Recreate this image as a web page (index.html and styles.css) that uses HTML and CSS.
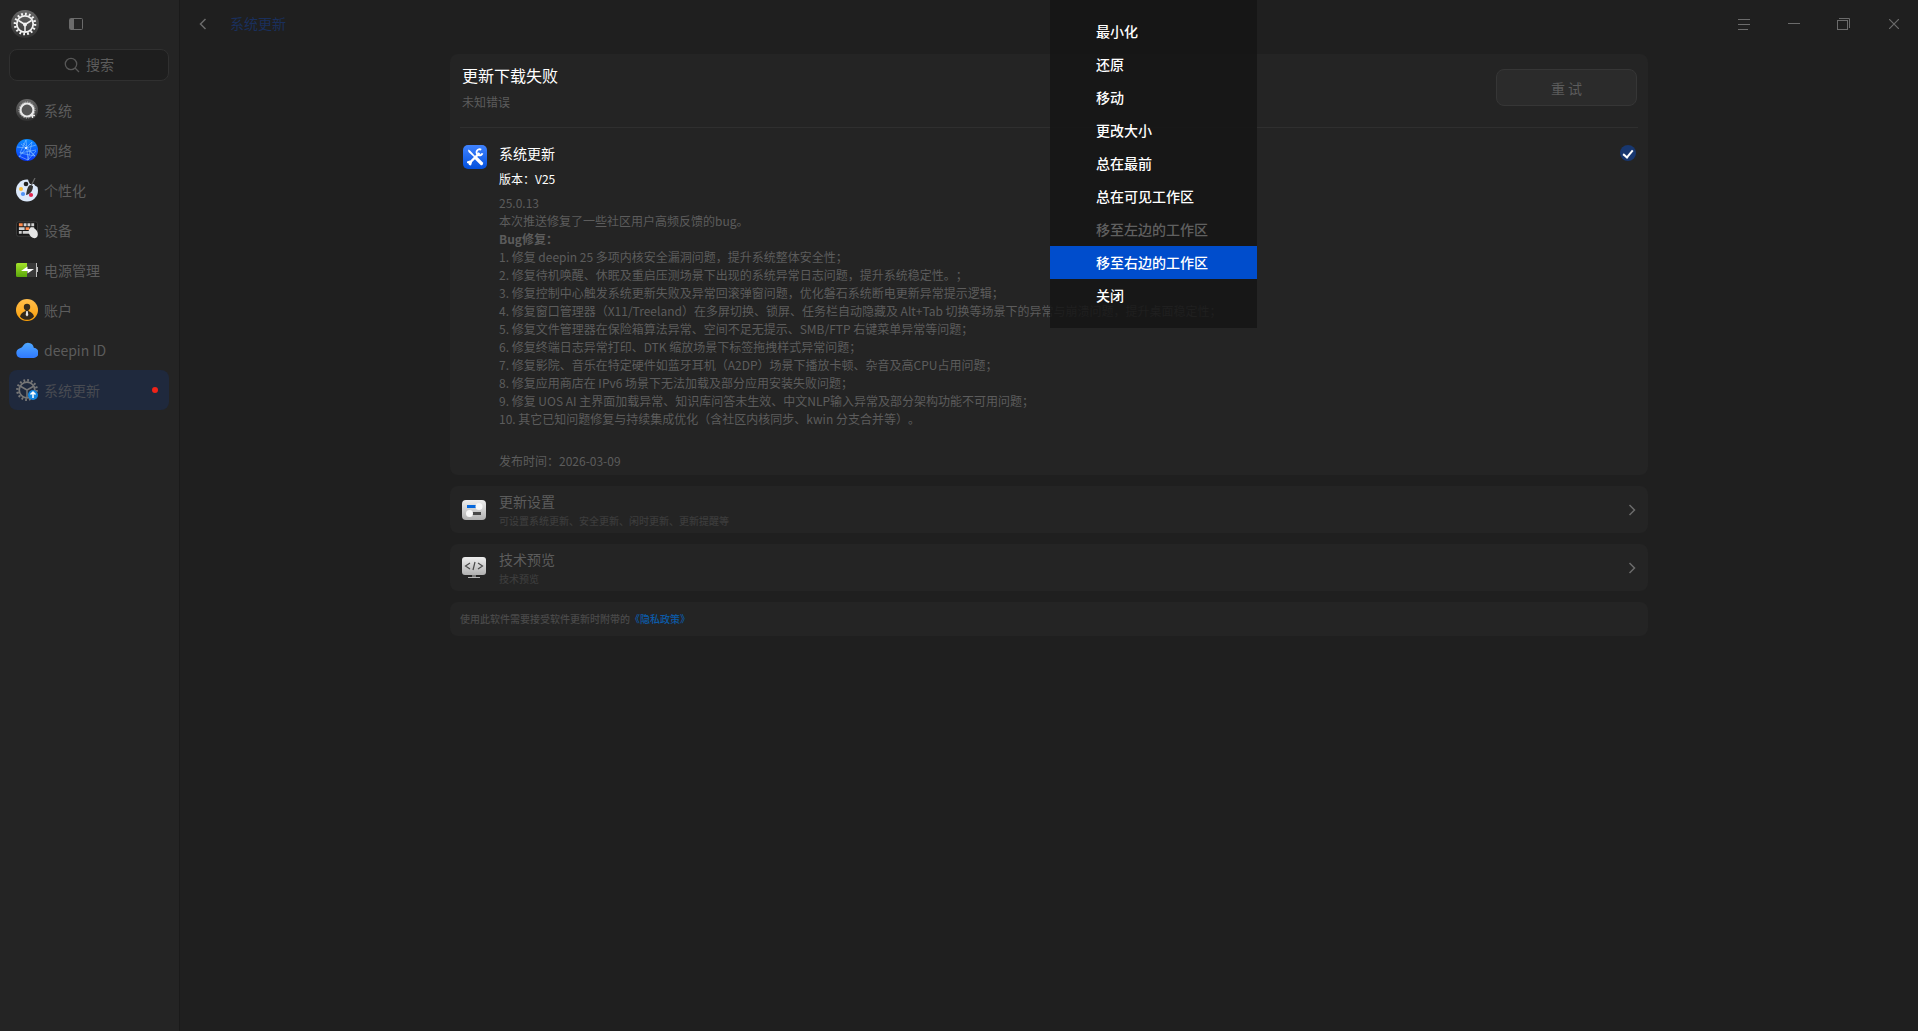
FILE: index.html
```html
<!DOCTYPE html>
<html lang="zh-CN">
<head>
    <meta charset="UTF-8">
    <title>系统更新</title>
    <link rel="stylesheet" href="styles.css">
</head>
<body>
    <div class="window">
        <aside class="sidebar">
            <div class="sidebar-top">
                <svg class="logo" width="28" height="28" viewBox="0 0 28 28">
                    <defs>
                        <linearGradient id="logo-bg" x1="0" y1="0" x2="0" y2="1">
                            <stop offset="0" stop-color="#6a6a6a"/>
                            <stop offset="1" stop-color="#303030"/>
                        </linearGradient>
                    </defs>
                    <circle cx="14" cy="14" r="14" fill="url(#logo-bg)"/>
                    <circle cx="14" cy="14" r="10" fill="none" stroke="#f2f2f2" stroke-width="2.6" stroke-dasharray="1.8 2.1"/>
                    <circle cx="14" cy="14" r="8.2" fill="none" stroke="#f2f2f2" stroke-width="1.8"/>
                    <path d="M14 14.500V22M14 14.500L7.500 10.500M14 14.500L20.500 10.500" stroke="#f2f2f2" stroke-width="1.500"/>
                    <circle cx="14" cy="14.500" r="2" fill="#f2f2f2"/>
                </svg>
                <button class="icon-button" aria-label="侧边栏">
                    <svg width="14" height="12" viewBox="0 0 14 12">
                        <rect x="0.5" y="0.5" width="13" height="11" rx="1" fill="none" stroke="#6b6b6b"/>
                        <rect x="1" y="1" width="4" height="10" fill="#6b6b6b"/>
                    </svg>
                </button>
            </div>
            <label class="search">
                <svg width="16" height="16" viewBox="0 0 16 16" fill="none" stroke="#575757" stroke-width="1.300">
                    <circle cx="7" cy="7" r="5.700"/>
                    <path d="M11 11l4 4"/>
                </svg>
                <input type="text" placeholder="搜索" aria-label="搜索">
            </label>
            <nav class="menu">
                <a href="#">
                    <svg width="22" height="22" viewBox="0 0 22 22">
                        <circle cx="11" cy="11" r="11" fill="url(#logo-bg)"/>
                        <circle cx="11" cy="11" r="6.500" fill="#555" stroke="#e8e8e8" stroke-width="2.200"/>
                        <circle cx="11" cy="11" r="8" fill="none" stroke="#cfcfcf" stroke-width="1" stroke-dasharray="1.200 1.300"/>
                        <path d="M14 16.500h5M16.500 14v5" stroke="#e8e8e8" stroke-width="1.400"/>
                    </svg>
                    <span>系统</span>
                </a>
                <a href="#">
                    <svg width="22" height="22" viewBox="0 0 22 22">
                        <defs>
                            <linearGradient id="net-bg" x1="0" y1="0" x2="0" y2="1">
                                <stop offset="0" stop-color="#0c8cff"/>
                                <stop offset="1" stop-color="#0a36f5"/>
                            </linearGradient>
                        </defs>
                        <circle cx="11" cy="11" r="11" fill="url(#net-bg)"/>
                        <path d="M10 1L4 14l15 3M10 1l2 20M10 9L1 8M10 9l10-3M10 9l-7 9M10 9l9 8M4 14l16-3M7 4l12 13M16 3l-4 18M5 5l5 4 6-6M3 17l9 4 8-9" fill="none" stroke="#8cc4ff" stroke-width="0.600"/>
                        <circle cx="10" cy="9" r="1" fill="#fff"/>
                    </svg>
                    <span>网络</span>
                </a>
                <a href="#">
                    <svg width="22" height="24" viewBox="0 0 22 24">
                        <circle cx="11" cy="12.500" r="11" fill="#dce9fb"/>
                        <path d="M12 0h10v9c-2-1-3-1-4-3l-4 0c-1-2-2-3-2-6z" fill="#242424"/>
                        <circle cx="10" cy="6" r="2.300" fill="#222"/>
                        <circle cx="5" cy="11" r="2" fill="#f8bd3c"/>
                        <circle cx="7" cy="16" r="2.100" fill="#4f93f7"/>
                        <circle cx="15" cy="17" r="2.100" fill="#e2264f"/>
                        <path d="M19 0L15 8" stroke="#666" stroke-width="1.200"/>
                        <path d="M14 7l3 1c0 4-2 8-7 9c1-4 1-8 4-10z" fill="#333"/>
                    </svg>
                    <span>个性化</span>
                </a>
                <a href="#">
                    <svg width="22" height="18" viewBox="0 0 23 18">
                        <rect x="0.500" y="0.500" width="22" height="15" rx="2" fill="#171717" stroke="#3d3d3d"/>
                        <path d="M3 2h4v3H3zM10 6h4v3h-4z" fill="#ff8a4c"/>
                        <path d="M8 2h3v3H8zM12 2h3v3h-3zM16 2h3v3h-3zM3 6h6v3H3zM3 10h3v3H3zM7 10h7v3H7zM15 6h4v3h-4z" fill="#cfcfcf"/>
                        <ellipse cx="18" cy="12" rx="4.300" ry="6" fill="#e6e6e6" transform="rotate(-30 18 12)"/>
                    </svg>
                    <span>设备</span>
                </a>
                <a href="#">
                    <svg width="22" height="14" viewBox="0 0 22 14">
                        <defs>
                            <linearGradient id="bat-bg" x1="0" y1="0" x2="0" y2="1">
                                <stop offset="0" stop-color="#a4e32a"/>
                                <stop offset="1" stop-color="#5aa60c"/>
                            </linearGradient>
                        </defs>
                        <rect x="0" y="0" width="21" height="14" rx="1.500" fill="#3a3a3a"/>
                        <path d="M1.500 0H11v14H1.500A1.500 1.500 0 0 1 0 12.500v-11A1.500 1.500 0 0 1 1.500 0z" fill="url(#bat-bg)"/>
                        <path d="M20 0h1v4h1v5h-1v5h-1z" fill="#bdbdbd"/>
                        <path d="M11.500 3.500v2.500H18L11.500 10.500V8H5z" fill="#fff"/>
                    </svg>
                    <span>电源管理</span>
                </a>
                <a href="#">
                    <svg width="22" height="22" viewBox="0 0 22 22">
                        <defs>
                            <linearGradient id="user-bg" x1="0" y1="0" x2="0" y2="1">
                                <stop offset="0" stop-color="#ffbe4d"/>
                                <stop offset="1" stop-color="#fb9f07"/>
                            </linearGradient>
                        </defs>
                        <circle cx="11" cy="11" r="11" fill="url(#user-bg)"/>
                        <circle cx="11" cy="8" r="3.200" fill="#33291c"/>
                        <path d="M9.500 10h3v2c3 1 5 3 5.500 5.500a9 9 0 0 1-14 0C4.500 15 6.500 13 9.500 12z" fill="#33291c"/>
                        <path d="M10.300 12h1.400l.6 4-1.300 1.500L9.700 16z" fill="#e6e6e6"/>
                    </svg>
                    <span>账户</span>
                </a>
                <a href="#">
                    <svg width="22" height="16" viewBox="0 0 22 16">
                        <defs>
                            <linearGradient id="cloud-bg" x1="0" y1="0" x2="0" y2="1">
                                <stop offset="0" stop-color="#4fa8ff"/>
                                <stop offset="1" stop-color="#2f79ff"/>
                            </linearGradient>
                        </defs>
                        <path d="M5 16a5 5 0 0 1-1-9.800C5.500 6 6.500 5 7 3.800a5.800 5.800 0 0 1 10.800 2A5.100 5.100 0 0 1 17 16z" fill="url(#cloud-bg)"/>
                    </svg>
                    <span>deepin ID</span>
                </a>
                <a href="#" class="active">
                    <svg width="22" height="22" viewBox="0 0 22 22">
                        <circle cx="11" cy="11" r="9.700" fill="none" stroke="#777" stroke-width="2.400" stroke-dasharray="1.800 2"/>
                        <circle cx="11" cy="11" r="7.800" fill="none" stroke="#777" stroke-width="1.700"/>
                        <path d="M11 11v8M11 11L4 7M11 11l7-4" stroke="#777" stroke-width="1.500"/>
                        <circle cx="17" cy="16" r="5" fill="#1584dc"/>
                        <path d="M17 19v-5M14.500 15.500L17 13l2.500 2.500" fill="none" stroke="#fff" stroke-width="1.500"/>
                    </svg>
                    <span>系统更新</span>
                    <i class="dot"></i>
                </a>
            </nav>
        </aside>

        <main class="main">
            <header class="titlebar">
                <button class="icon-button back" aria-label="返回">
                    <svg width="8" height="12" viewBox="0 0 8 12">
                        <path d="M6.500 1L1.500 6l5 5" fill="none" stroke="#6b6b6b" stroke-width="1.500"/>
                    </svg>
                </button>
                <h1>系统更新</h1>
                <div class="window-buttons">
                    <button aria-label="菜单">
                        <svg width="12" height="12" viewBox="0 0 12 12"><path d="M0 1.500h12M0 6.500h12M0 11.500h10" stroke="#6b6b6b"/></svg>
                    </button>
                    <button aria-label="最小化">
                        <svg width="12" height="12" viewBox="0 0 12 12"><path d="M0 5.500h12" stroke="#6b6b6b"/></svg>
                    </button>
                    <button aria-label="还原">
                        <svg width="14" height="12" viewBox="0 0 14 12" fill="none" stroke="#6b6b6b"><rect x="0.500" y="2.500" width="10" height="9"/><path d="M2 0.500h10.500V10"/></svg>
                    </button>
                    <button aria-label="关闭">
                        <svg width="10" height="10" viewBox="0 0 10 10"><path d="M0 0l10 10M10 0L0 10" stroke="#6b6b6b" stroke-width="1.200"/></svg>
                    </button>
                </div>
            </header>

            <div class="content">
                <section class="card update">
                    <div class="status">
                        <div>
                            <h2>更新下载失败</h2>
                            <p>未知错误</p>
                        </div>
                        <button class="retry">重 试</button>
                    </div>
                    <div class="detail">
                        <svg width="24" height="24" viewBox="0 0 24 24">
                            <defs>
                                <linearGradient id="tool-bg" x1="0" y1="0" x2="0" y2="1">
                                    <stop offset="0" stop-color="#4083ff"/>
                                    <stop offset="1" stop-color="#0350dc"/>
                                </linearGradient>
                            </defs>
                            <rect width="24" height="24" rx="5" fill="url(#tool-bg)"/>
                            <path d="M5 4.500l2 1 5.500 6-1 1-6-5.500z" fill="#fff"/>
                            <path d="M13.500 13.500l5 5" stroke="#fff" stroke-width="3.200" stroke-linecap="round"/>
                            <path d="M7 17.500L16.500 8" stroke="#fff" stroke-width="2.400"/>
                            <path d="M18.200 4.800a3 3 0 1 0 1.200 3.400" fill="none" stroke="#fff" stroke-width="1.900"/>
                            <path d="M4 16.500l3-1 2 2-1 3-2-.5-.5-1.500L4 18z" fill="#fff"/>
                        </svg>
                        <div class="detail-text">
                            <h3>系统更新</h3>
                            <p class="version">版本：V25</p>
                            <ul class="notes">
                                <li>25.0.13</li>
                                <li>本次推送修复了一些社区用户高频反馈的bug。</li>
                                <li><b>Bug修复：</b></li>
                                <li>1. 修复 deepin 25 多项内核安全漏洞问题，提升系统整体安全性；</li>
                                <li>2. 修复待机唤醒、休眠及重启压测场景下出现的系统异常日志问题，提升系统稳定性。；</li>
                                <li>3. 修复控制中心触发系统更新失败及异常回滚弹窗问题，优化磐石系统断电更新异常提示逻辑；</li>
                                <li>4. 修复窗口管理器（X11/Treeland）在多屏切换、锁屏、任务栏自动隐藏及 Alt+Tab 切换等场景下的异常与崩溃问题，提升桌面稳定性；</li>
                                <li>5. 修复文件管理器在保险箱算法异常、空间不足无提示、SMB/FTP 右键菜单异常等问题；</li>
                                <li>6. 修复终端日志异常打印、DTK 缩放场景下标签拖拽样式异常问题；</li>
                                <li>7. 修复影院、音乐在特定硬件如蓝牙耳机（A2DP）场景下播放卡顿、杂音及高CPU占用问题；</li>
                                <li>8. 修复应用商店在 IPv6 场景下无法加载及部分应用安装失败问题；</li>
                                <li>9. 修复 UOS AI 主界面加载异常、知识库问答未生效、中文NLP输入异常及部分架构功能不可用问题；</li>
                                <li>10. 其它已知问题修复与持续集成优化（含社区内核同步、kwin 分支合并等）。</li>
                            </ul>
                            <p class="date">发布时间：2026-03-09</p>
                        </div>
                        <input type="checkbox" class="check" aria-label="系统更新" checked>
                    </div>
                </section>

                <a href="#" class="card row">
                    <svg width="24" height="20" viewBox="0 0 24 20">
                        <defs>
                            <linearGradient id="gray-bg" x1="0" y1="0" x2="0" y2="1">
                                <stop offset="0" stop-color="#eeeeee"/>
                                <stop offset="1" stop-color="#b0b0b0"/>
                            </linearGradient>
                        </defs>
                        <rect width="24" height="20" rx="4" fill="url(#gray-bg)"/>
                        <rect x="5" y="5" width="10" height="3" fill="#0768dc"/>
                        <circle cx="17" cy="6.500" r="3.500" fill="#f8f8f8"/>
                        <rect x="9" y="12" width="10" height="3" fill="#484848"/>
                        <circle cx="7.500" cy="13.500" r="3.500" fill="#f8f8f8"/>
                    </svg>
                    <div class="row-text">
                        <h3>更新设置</h3>
                        <p>可设置系统更新、安全更新、闲时更新、更新提醒等</p>
                    </div>
                    <svg class="arrow" width="8" height="12" viewBox="0 0 8 12"><path d="M1.500 1l5 5-5 5" fill="none" stroke="#6b6b6b" stroke-width="1.500"/></svg>
                </a>

                <a href="#" class="card row">
                    <svg width="24" height="22" viewBox="0 0 24 22">
                        <rect width="24" height="18" rx="3" fill="url(#gray-bg)"/>
                        <path d="M10 18h4v2h-4z" fill="#777"/>
                        <path d="M6 20h12v1H6z" fill="#b5b5b5"/>
                        <path d="M8 6L3.500 9 8 12M16 6l4.500 3-4.500 3M13 5l-2 8" fill="none" stroke="#4a4a4a" stroke-width="1.200"/>
                    </svg>
                    <div class="row-text">
                        <h3>技术预览</h3>
                        <p>技术预览</p>
                    </div>
                    <svg class="arrow" width="8" height="12" viewBox="0 0 8 12"><path d="M1.500 1l5 5-5 5" fill="none" stroke="#6b6b6b" stroke-width="1.500"/></svg>
                </a>

                <p class="card privacy">使用此软件需要接受软件更新时附带的<a href="#">《隐私政策》</a></p>
            </div>
        </main>
    </div>

    <!-- window context menu -->
    <div class="context-menu">
        <button>最小化</button>
        <button>还原</button>
        <button>移动</button>
        <button>更改大小</button>
        <button>总在最前</button>
        <button>总在可见工作区</button>
        <button disabled>移至左边的工作区</button>
        <button class="selected">移至右边的工作区</button>
        <button>关闭</button>
    </div>
</body>
</html>
```
FILE: styles.css
```css
* {
    box-sizing: border-box;
}
body {
    margin: 0;
    background: #1f1f1f;
    color: #5c5c5c;
    font-family: "Noto Sans CJK SC", "Noto Sans", sans-serif;
    font-size: 14px;
    line-height: 20px;
    text-spacing-trim: space-all;
}
h1, h2, h3, p, ul {
    margin: 0;
    padding: 0;
    font-weight: normal;
}
a {
    color: inherit;
    text-decoration: none;
}
button {
    margin: 0;
    padding: 0;
    border: none;
    background: none;
    color: inherit;
    font: inherit;
}
svg {
    display: block;
    flex: none;
}
.window {
    display: flex;
    min-height: 100vh;
}

/* sidebar */
.sidebar {
    width: 180px;
    flex: none;
    padding: 0 10px 0 9px;
    background: #242424;
    border-right: 1px solid #1a1a1a;
}
.sidebar-top {
    display: flex;
    align-items: center;
    height: 48px;
    padding-left: 2px;
}
.icon-button {
    display: flex;
    align-items: center;
    justify-content: center;
    width: 30px;
    height: 30px;
}
.sidebar-top .icon-button {
    margin-left: 22px;
}
.search {
    display: flex;
    align-items: center;
    justify-content: center;
    gap: 6px;
    height: 32px;
    margin-top: 1px;
    background: #1e1e1e;
    border: 1px solid #303030;
    border-radius: 8px;
}
.search input {
    width: 28px;
    padding: 0 0 2px;
    border: none;
    outline: none;
    background: none;
    color: #5c5c5c;
    font: inherit;
}
.search input::placeholder {
    color: #5c5c5c;
    opacity: 1;
}
.menu {
    margin-top: 9px;
}
.menu a {
    display: flex;
    align-items: center;
    height: 40px;
    padding: 0 11px 0 7px;
    border-radius: 8px;
}
.menu span {
    flex: 1;
    margin-left: 6px;
}
.menu .active {
    background: #1f293d;
    color: #484b52;
}
.dot {
    width: 6px;
    height: 6px;
    border-radius: 50%;
    background: #f02318;
}

/* title bar */
.main {
    flex: 1;
    min-width: 0;
}
.titlebar {
    display: flex;
    align-items: center;
    height: 48px;
    padding-left: 8px;
}
.titlebar h1 {
    margin-left: 12px;
    padding-bottom: 2px;
    color: #1a2f5c;
    font-size: 14px;
}
.window-buttons {
    display: flex;
    margin-left: auto;
}
.window-buttons button {
    display: flex;
    align-items: center;
    justify-content: center;
    width: 50px;
    height: 48px;
    padding-left: 2px;
}

/* content */
.content {
    display: flex;
    flex-direction: column;
    gap: 11px;
    max-width: 1198px;
    margin: 6px auto 0;
}
.card {
    background: #242424;
    border-radius: 8px;
}
.update {
    padding: 0 10px 5px;
}
.status {
    display: flex;
    align-items: center;
    justify-content: space-between;
    height: 74px;
    padding: 0 1px 6px 2px;
    border-bottom: 1px solid #2f2f2f;
}
.status h2 {
    color: #fff;
    font-size: 16px;
    line-height: 24px;
}
.status p {
    margin-top: 5px;
    font-size: 12px;
}
.retry {
    width: 141px;
    height: 37px;
    background: #2b2b2b;
    border: 1px solid #363636;
    border-radius: 8px;
}
.detail {
    display: flex;
    align-items: flex-start;
    padding: 17px 2px 0 3px;
}
.detail-text {
    flex: 1;
    margin-left: 12px;
    font-size: 12px;
    line-height: 18px;
}
.detail h3 {
    color: #fff;
    font-size: 14px;
    line-height: 16px;
}
.version {
    margin-top: 9px;
    color: #fff;
}
.notes {
    margin-top: 6px;
    list-style: none;
}
.date {
    margin-top: 24px;
}
.check {
    appearance: none;
    display: flex;
    justify-content: center;
    width: 16px;
    height: 16px;
    margin: 0;
    border-radius: 50%;
    background: #18376f;
}
.check::after {
    content: "";
    width: 4px;
    height: 8px;
    margin-top: 3px;
    border: solid #fff;
    border-width: 0 2px 2px 0;
    transform: rotate(40deg);
}
.row {
    display: flex;
    align-items: center;
    height: 47px;
    padding: 0 12px;
}
.row-text {
    flex: 1;
    margin-left: 13px;
    padding-top: 2px;
}
.row h3 {
    font-size: 14px;
}
.row p {
    color: #3c3c3c;
    font-size: 10px;
    font-weight: 500;
}
.privacy {
    padding: 7px 10px;
    color: #4a4a4a;
    font-size: 10px;
    font-weight: 500;
}
.privacy a {
    color: #0c5ba8;
}

/* context menu */
.context-menu {
    position: absolute;
    top: 0;
    left: 1050px;
    width: 207px;
    padding: 15px 0 16px;
    background: rgba(21, 21, 21, 0.86);
}
.context-menu button {
    display: block;
    width: 100%;
    height: 33px;
    padding: 0 0 1px 46px;
    color: #fff;
    font-weight: 500;
    text-align: left;
}
.context-menu button:disabled {
    color: #606060;
}
.context-menu .selected {
    background: #004dcc;
}
```
